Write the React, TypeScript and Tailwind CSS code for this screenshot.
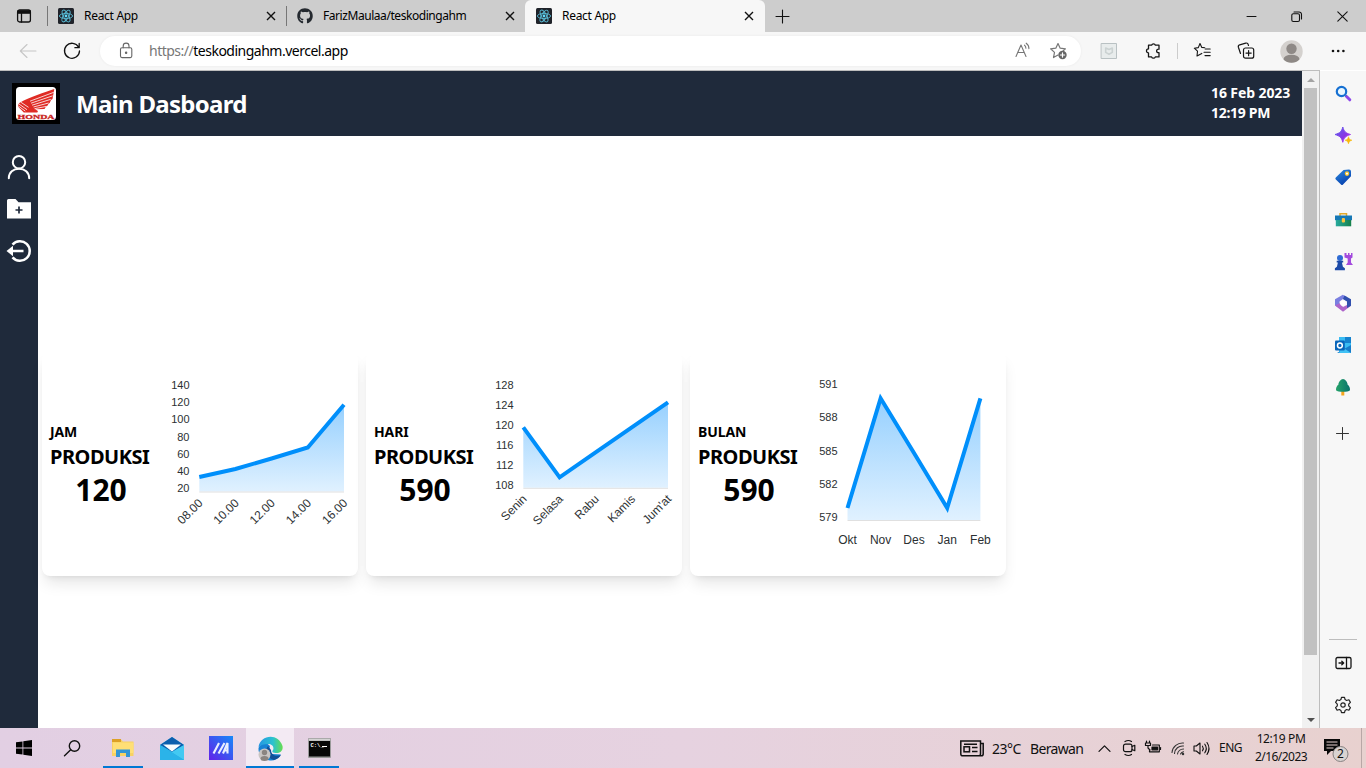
import React from "react";
import { FaGithub } from "react-icons/fa";

type Chart = {
  label: string;
  value: string;
  pts: [number, number][];
  base: number;
  ticks: string[];
  tick0: number;
  step: number;
  names: string[];
  rotated: boolean;
  nameY: number;
};

const charts: Chart[] = [
  { label: "JAM", value: "120", pts: [[199.3, 477], [235.4, 469], [271.6, 458.5], [307.8, 447.5], [344, 404.8]], base: 491.5, ticks: ["140", "120", "100", "80", "60", "40", "20"], tick0: 389, step: 17.24, names: ["08.00", "10.00", "12.00", "14.00", "16.00"], rotated: true, nameY: 503.5 },
  { label: "HARI", value: "590", pts: [[199.3, 427.3], [235.6, 477.3], [271.6, 452.3], [307.8, 427.3], [344, 402.3]], base: 487.8, ticks: ["128", "124", "120", "116", "112", "108"], tick0: 389, step: 20, names: ["Senin", "Selasa", "Rabu", "Kamis", "Jum'at"], rotated: true, nameY: 499.5 },
  { label: "BULAN", value: "590", pts: [[199.5, 508], [232.6, 398.3], [266, 453], [299.2, 508], [332.4, 398.3]], base: 520, ticks: ["591", "588", "585", "582", "579"], tick0: 388, step: 33.25, names: ["Okt", "Nov", "Des", "Jan", "Feb"], rotated: false, nameY: 544 },
];

function AreaChart({ c }: { c: Chart }) {
  const line = c.pts.map((p) => p.join(",")).join(" ");
  const first = c.pts[0][0];
  const last = c.pts[c.pts.length - 1][0];
  const top = Math.min(...c.pts.map((p) => p[1]));
  return (
    <svg width="196" height="224" viewBox="162 352 196 224" className="block shrink-0 font-['Liberation_Sans',sans-serif]">
      <defs>
        <linearGradient id={"fill" + c.label} gradientUnits="userSpaceOnUse" x1="0" x2="0" y1={top} y2={c.base}>
          <stop offset="0" stopColor="#96d0fe" />
          <stop offset="1" stopColor="#e0f1ff" />
        </linearGradient>
      </defs>
      <polygon points={`${line} ${last},${c.base} ${first},${c.base}`} fill={`url(#fill${c.label})`} />
      <path d={`M${first} ${c.base + 0.5}H${last}`} stroke="#e0e0e0" />
      <polyline points={line} fill="none" stroke="#008ffb" strokeWidth="4" strokeMiterlimit="10" />
      {c.ticks.map((t, i) => (
        <text key={t} x="189.5" y={c.tick0 + i * c.step} textAnchor="end" fontSize="11" fill="#2b3032">{t}</text>
      ))}
      {c.names.map((n, i) =>
        c.rotated ? (
          <text key={n} textAnchor="end" fontSize="12" fill="#2f3436" transform={`translate(${c.pts[i][0] + 4.2} ${c.nameY + 0.2}) rotate(-45)`}>{n}</text>
        ) : (
          <text key={n} x={c.pts[i][0]} y={c.nameY} textAnchor="middle" fontSize="12" fill="#2b3032">{n}</text>
        )
      )}
    </svg>
  );
}

function ReactIcon() {
  return (
    <svg width="16" height="16" viewBox="0 0 16 16" className="shrink-0">
      <rect width="16" height="16" rx="1.5" fill="#20232a" />
      <g fill="none" stroke="#58b9d3" strokeWidth=".9">
        <ellipse cx="8" cy="8" rx="6.6" ry="2.6" />
        <ellipse cx="8" cy="8" rx="6.6" ry="2.6" transform="rotate(60 8 8)" />
        <ellipse cx="8" cy="8" rx="6.6" ry="2.6" transform="rotate(120 8 8)" />
      </g>
      <circle cx="8" cy="8" r="1.4" fill="#61dafb" />
    </svg>
  );
}

function Tab({ title, github, active }: { title: string; github?: boolean; active?: boolean }) {
  return (
    <div className={active ? "flex h-8 w-[240px] items-center rounded-t-md bg-[#f7f7f7] pl-[11px] pr-[10px]" : github ? "flex h-8 w-[238px] items-center pl-[10px] pr-[9px]" : "flex h-8 w-[239px] items-center pl-[10px] pr-[10px]"}>
      {github ? <FaGithub size={16} color="#24292f" className="shrink-0" /> : <ReactIcon />}
      <span className={github ? "ml-[10px] flex-1 whitespace-nowrap text-[12px] leading-4 tracking-[-0.44px] text-black" : "ml-[10px] flex-1 whitespace-nowrap text-[12px] leading-4 tracking-[-0.3px] text-black"}>{title}</span>
      <svg width="12" height="12" viewBox="0 0 12 12" fill="none" stroke="#111" strokeWidth="1.4">
        <path d="M2 2l8 8M10 2l-8 8" />
      </svg>
    </div>
  );
}

function Svg({ s = 18, sw = 1.2, c = "#222", children }: { s?: number; sw?: number; c?: string; children: React.ReactNode }) {
  return (
    <svg width={s} height={s} viewBox={`0 0 ${s} ${s}`} fill="none" stroke={c} strokeWidth={sw} strokeLinecap="round" strokeLinejoin="round" className="shrink-0 overflow-visible">
      {children}
    </svg>
  );
}

function TabBar() {
  return (
    <div className="flex h-8 items-center bg-[#cdcdcd]">
      <div className="flex w-[47px] items-center pl-4">
        <Svg s={16} sw={1.3} c="#111">
          <rect x="1.6" y="2" width="12.8" height="12" rx="2" />
          <path d="M1.8 2.8h12.4v2.400H1.800z" fill="#111" />
          <path d="M5.500 5v9" />
        </Svg>
      </div>
      <div className="h-5 w-px bg-[#777]" />
      <Tab title="React App" />
      <div className="-ml-px h-5 w-px bg-[#777]" />
      <Tab title="FarizMaulaa/teskodingahm" github />
      <Tab title="React App" active />
      <div className="ml-[10px] flex">
        <Svg s={15} c="#111" sw={1.1}><path d="M1 7.5h13M7.5 1v13" /></Svg>
      </div>
      <div className="ml-auto flex w-[126px] items-center pl-1">
        <div className="flex w-[47px] pl-[2px]"><Svg s={11} c="#111" sw={1}><path d="M1 5.5h9" /></Svg></div>
        <div className="flex w-[46px]">
          <Svg s={11} c="#111" sw={1.1}>
            <rect x=".8" y="2.800" width="7.700" height="7.700" rx="1.500" />
            <path d="M3 1h5a2.500 2.500 0 0 1 2.500 2.500V8" />
          </Svg>
        </div>
        <Svg s={11} c="#111" sw={1.1}><path d="M.8.8l9.4 9.4M10.2.8L.8 10.2" /></Svg>
      </div>
    </div>
  );
}

function Toolbar() {
  return (
    <div className="flex h-[38px] items-center bg-[#f7f7f7]">
      <div className="ml-[19px] flex">
        <Svg s={18} c="#c6c6c6" sw={1.1}><path d="M17 9H1.500M8 2.500L1.300 9 8 15.500" /></Svg>
      </div>
      <div className="ml-[26px] flex">
        <Svg s={18} c="#111" sw={1.3}><path d="M15.600 5.200A7.500 7.500 0 1 0 16.500 9M16.200 1.500v4.200h-4.300" /></Svg>
      </div>
      <div className="ml-[19px] flex h-[30px] w-[981px] items-center rounded-full bg-white pl-[17px] shadow-[0_0_3px_rgba(0,0,0,0.06)]">
        <Svg s={18} c="#666" sw={1.1}>
          <rect x="3.500" y="5.800" width="11.300" height="9.800" rx="1.500" />
          <path d="M6.200 5.800V4a2.900 2.900 0 0 1 5.800 0v1.800" />
          <circle cx="9.100" cy="10.700" r=".7" fill="#666" />
        </Svg>
        <span className="ml-[14px] flex-1 text-[14px] leading-5 tracking-[-0.5px] text-black"><span className="text-[#777]">https://</span>teskodingahm.vercel.app</span>
        <Svg s={18} c="#777" sw={1.1}>
          <path d="M1 14.500L6 3l5 11.500M2.800 10.500h6.400" />
          <path d="M9.500 3.200c1 .8 1.400 1.800 1.400 3M11.200 1.200c1.800 1.300 2.800 3.200 2.700 5.400" />
        </Svg>
        <div className="ml-[17px] mr-[13px] flex">
          <Svg s={18} c="#777" sw={1.2}>
            <path d="M8 1.500l2.200 4.700 5.200.6-3.800 3.600M8 1.500L5.800 6.200l-5.200.6 3.900 3.600-1 5.200L8 13.100" />
            <circle cx="12.500" cy="13" r="4.200" fill="#666" stroke="none" />
            <path d="M10.400 13h4.200M12.500 10.900v4.200" stroke="#fff" />
          </Svg>
        </div>
      </div>
      <div className="ml-[19px] flex">
        <Svg s={18} c="#b9c1c3" sw={1}>
          <rect x="1.500" y="1.500" width="15" height="15" fill="#e8ecec" />
          <path d="M5.700 6l3.300 1.500L12.300 6v4.400L9 12.200l-3.300-1.800z" strokeWidth="1.600" stroke="#cbd2d2" />
        </Svg>
      </div>
      <div className="ml-[26px] flex">
        <Svg s={18} c="#151515" sw={1.3}>
          <path d="M4.500 3.200h3.100a2 2 0 0 1 3.800 0h3.600v4a1.800 1.800 0 1 0 0 3.400v4.300h-3.700a2 2 0 0 1-3.700 0H4.500v-4a2 2 0 0 1 0-4z" />
        </Svg>
      </div>
      <div className="ml-[15px] h-4 w-px bg-[#ccc]" />
      <div className="ml-[16px] flex">
        <Svg s={18} c="#151515" sw={1.1}>
          <path d="M10.800 5.700L7.800 5.400 6 1.500 4.300 5.600l-4 .6 3.200 3L3 14l4.800-2.600M11.200 7h5M10 10.300h6.200M11 13.600h5.200" />
        </Svg>
      </div>
      <div className="ml-[25px] flex">
        <Svg s={18} c="#151515" sw={1.2}>
          <path d="M3.500 11.500L1.400 5.300a2 2 0 0 1 1.300-2.500l6-1.700a2 2 0 0 1 2.500 1.400l.3 1" />
          <rect x="6.500" y="6" width="10.200" height="10.200" rx="2" />
          <path d="M11.600 8.500v5.200M9 11.100h5.200" />
        </Svg>
      </div>
      <div className="ml-[25px] flex">
        <svg width="23" height="23" viewBox="0 0 23 23">
          <clipPath id="avatar"><circle cx="11.500" cy="11.500" r="11.200" /></clipPath>
          <g clipPath="url(#avatar)"><path fill="#d4d1ce" d="M0 0h23v23H0z" /><circle cx="11.500" cy="8.700" r="5.200" fill="#8e8986" /><ellipse cx="11.500" cy="19.300" rx="8" ry="4.500" fill="#8e8986" /></g>
        </svg>
      </div>
      <div className="ml-[28px] flex"><svg width="14" height="4"><g fill="#111"><circle cx="2" cy="2" r="1.300" /><circle cx="7.200" cy="2" r="1.300" /><circle cx="12.400" cy="2" r="1.300" /></g></svg></div>
    </div>
  );
}

function HondaLogo() {
  return (
    <div className="flex h-[41px] w-12 items-center justify-center bg-black">
      <svg width="40" height="33" viewBox="0 0 40 33">
        <rect width="40" height="33" rx="3.500" fill="#fff" />
        <path d="M38.300 2C29 5 13 10.500 5 15c-3 1.600-3.600 3.700-1.600 6l4.400 4.400h13.500l.7-1.400-3-1.700 9.500-.3 1.500-2.500 1.200-.4 1.500-2.600 1-.4 1.300-3 1.500-1z" fill="#df2b24" />
        <path d="M37.800 5.300L14 14.200M36.700 8.800L15 16.200M34.800 12.300L16 18.200M32.500 16l-15 4M30.500 19.400l-12 2.300M3 17l8 5.700M4.500 15l8 5.300M2.800 19.300l6.500 4.800" stroke="#fff" strokeWidth=".8" />
        <text x="1.500" y="31.500" textLength="37" lengthAdjust="spacingAndGlyphs" fontSize="6.900" fontWeight="700" fill="#c91f22" stroke="#c91f22" strokeWidth=".3" fontFamily="Liberation Serif, serif">HONDA</text>
      </svg>
    </div>
  );
}

function WebPage() {
  return (
    <div className="flex w-[1302px] flex-col bg-white">
      <header className="flex h-[65px] shrink-0 items-center bg-[#1f2a3b] pl-3 pr-[12px] text-white">
        <HondaLogo />
        <h1 className="ml-[16px] flex-1 whitespace-nowrap pt-px text-[24px] font-bold leading-8 tracking-[-0.72px]">Main Dasboard</h1>
        <div className="w-[79px] whitespace-nowrap pb-px text-[14px] font-bold leading-5">
          <div className="tracking-[-0.1px]">16 Feb 2023</div>
          <div className="tracking-[-0.3px]">12:19 PM</div>
        </div>
      </header>
      <div className="flex flex-1">
        <nav className="flex w-[38px] flex-col items-center gap-[18px] bg-[#1f2a3b] pt-[19px]">
          <Svg s={24} c="#fff" sw={2}><circle cx="12" cy="7.200" r="6.200" /><path d="M1.800 23.300c0-5.800 4.500-9.600 10.200-9.600s10.200 3.800 10.200 9.600" /></Svg>
          <svg width="24" height="24" viewBox="0 0 24 24"><path fill="#fff" d="M0 3.500A1.500 1.500 0 0 1 1.500 2h7l3 3.200H24v16.300H0z" /><path stroke="#1f2a3b" strokeWidth="1.700" d="M12 9.500v7M8.500 13h7" /></svg>
          <svg width="26" height="24" viewBox="0 0 26 24" fill="none" stroke="#fff" strokeWidth="2.500"><path d="M6.500 5.600a9.800 9.800 0 1 1 0 12.800M17.500 12H5" /><path d="M.5 12L7 6.800v10.400z" fill="#fff" stroke="none" /></svg>
        </nav>
        <main className="flex flex-1 items-start gap-2 pl-1 pt-[216px]">
          {charts.map((c) => (
            <section key={c.label} className="flex h-[224px] w-[316px] items-center justify-between rounded-lg bg-white pl-2 shadow-lg">
              <div className="w-[102px] whitespace-nowrap pt-[2px] font-bold text-black">
                <div className="text-[14px] leading-5 tracking-[-0.1px]">{c.label}</div>
                <div className="text-[20px] leading-[30px] tracking-[-0.48px]">PRODUKSI</div>
                <div className="text-center text-[30px] leading-9">{c.value}</div>
              </div>
              <AreaChart c={c} />
            </section>
          ))}
        </main>
      </div>
    </div>
  );
}

function ScrollBar() {
  return (
    <div className="flex w-[17px] flex-col items-center bg-[#f1f1f1]">
      <div className="flex h-[17px] items-center"><svg width="8" height="4"><path d="M0 4l4-4 4 4z" fill="#a3a3a3" /></svg></div>
      <div className="h-[567px] w-[13px] bg-[#c1c1c1]" />
      <div className="mt-auto flex h-[17px] items-center"><svg width="8" height="4"><path d="M0 0h8L4 4z" fill="#505050" /></svg></div>
    </div>
  );
}

const sideIcons: React.ReactNode[] = [
  <g key="s"><circle cx="6.500" cy="6.500" r="4.700" fill="#eaf8ff" stroke="#1670d2" strokeWidth="2.200" /><path d="M10.500 10.500l1.300 1.300" stroke="#1650b0" strokeWidth="2" /><path d="M11.800 11.800l3 3" stroke="#8f47e9" strokeWidth="3" strokeLinecap="round" /></g>,
  <g key="d"><path d="M7.800 0c1.200 4.500 2.700 6 7.700 7.500-5 1.600-6.500 3.200-7.700 7.800C6.600 10.700 5.200 9.100 0 7.500 5.200 6 6.600 4.500 7.800 0z" fill="url(#violet)" stroke="url(#violet)" strokeLinejoin="round" /><path d="M13.500 9.700c.7 2.400 1.200 2.900 3.500 3.500-2.300.7-2.800 1.200-3.500 3.700-.7-2.500-1.200-3-3.500-3.700 2.300-.6 2.800-1.100 3.500-3.500z" fill="#f9b90c" stroke="#f9b90c" strokeWidth=".5" /></g>,
  <g key="t"><path d="M8.500 1L14 .5q2 0 2 2v4.700L8 15.600q-1 1-2 0L.8 10.400q-1-1 0-2z" fill="url(#blue)" /><circle cx="12" cy="4.600" r="1.700" fill="#fff" stroke="#f5c52c" strokeWidth="1.200" /></g>,
  <g key="b"><path d="M5 5V2.800h6.500V5" fill="none" stroke="#e3a92b" strokeWidth="1.500" /><path d="M0 4.500h17v4.700H0z" fill="#1678b5" /><path d="M.8 9h15.400v6.300H.8z" fill="url(#teal)" /><rect x="6.800" y="7" width="3.200" height="4.500" rx="1" fill="#f8c440" /></g>,
  <g key="c"><path d="M9.500 0h2v2H13V0h1.500v2H16V0h1.500v4.500l-1.500 1v4l2 2.500h-7l1.700-2.500v-4L9.500 4.500z" fill="#a34add" /><circle cx="5" cy="5" r="3" fill="#2e6bd3" /><path d="M1.700 7.700h6.500v1.800H6.900l1 4.200 2 1.500v2h-10v-2l2-1.500 1-4.200H1.700z" fill="#1c4aa8" /></g>,
  <g key="o"><path d="M7.800-.2l4 2.200v4L8 4 4.500 6.500V13L0 10.500V4.300z" fill="#7a7fe0" /><path d="M0 10.500l4.500-2.300L8 12l4-2 4 .7-8 6z" fill="#ae65ca" /><path d="M9.500.6L16 4.300v6.400L12 13V6.500L8 4z" fill="#304fae" /><circle cx="8" cy="8.200" r="2.700" fill="#fff" /></g>,
  <g key="l"><path d="M4 0h12v15H4z" fill="#39bcf3" /><path d="M10 0h6v6h-6z" fill="#1582ce" /><path d="M2 16l14-8v8z" fill="#167dca" /><path d="M7 10l9 6H4z" fill="#41c2f5" /><rect y="3.500" width="9.800" height="10" rx="1" fill="#0865b9" /><circle cx="4.900" cy="8.500" r="2.400" fill="none" stroke="#fff" strokeWidth="1.500" /></g>,
  <g key="tr"><path d="M6.300 11h3v5.500h-3z" fill="#f5a51d" /><path d="M8 0c2 0 5 3.700 4.500 5.500 2 1.500 3 4.500 2.300 6-1 1.700-12.600 1.700-13.600 0-.7-1.500.3-4.500 2.300-6C3 3.700 6 0 8 0z" fill="url(#tree)" /></g>,
];

function EdgeSidebar() {
  return (
    <aside className="flex w-[47px] flex-col items-center border-l border-[#bdbdbd] bg-[#f7f7f7] pt-[14px]">
      <svg width="0" height="0" className="absolute"><defs>
        <linearGradient id="violet" x2="1" y2="1"><stop stopColor="#5965ee" /><stop offset=".6" stopColor="#8a35e5" /><stop offset="1" stopColor="#d34ff0" /></linearGradient>
        <linearGradient id="blue" x2=".6" y2="1"><stop stopColor="#2e8de0" /><stop offset="1" stopColor="#063fae" /></linearGradient>
        <linearGradient id="teal"><stop stopColor="#27aa9e" /><stop offset="1" stopColor="#15804a" /></linearGradient>
        <linearGradient id="tree"><stop stopColor="#26a36a" /><stop offset="1" stopColor="#08736b" /></linearGradient>
      </defs></svg>
      <div className="flex flex-col gap-[25px]">
        {sideIcons.map((icon, i) => <svg key={i} width="17" height="17" viewBox="0 0 17 17" className="overflow-visible">{icon}</svg>)}
      </div>
      <div className="mt-[31px] flex pr-px"><Svg s={13} c="#333" sw={1}><path d="M.5 6.500h12M6.500 .5v12" /></Svg></div>
      <div className="mt-auto h-px w-7 bg-[#bdbdbd]" />
      <div className="mt-[15px] flex">
        <Svg s={17} c="#151515" sw={1.300}><rect x="1" y="2.500" width="15" height="11" rx="1.500" /><path d="M11.500 2.500v11M4 8h4.500M6.800 6.200l1.900 1.800-1.900 1.800" /></Svg>
      </div>
      <div className="mb-[14px] mt-[24px] flex">
        <Svg s={18} c="#222" sw={1.200}><path d="M7.500 1.300h3l.6 2.300 1.500.9 2.300-.7 1.500 2.600-1.700 1.700v1.800l1.700 1.700-1.500 2.600-2.300-.7-1.500.9-.6 2.300h-3l-.6-2.300-1.500-.9-2.300.7-1.500-2.600 1.700-1.700V8.100L1.600 6.400l1.500-2.600 2.300.7 1.500-.9z" /><circle cx="9" cy="9" r="2.200" /></Svg>
      </div>
    </aside>
  );
}

function TaskButton({ running, active, children }: { running?: boolean; active?: boolean; children: React.ReactNode }) {
  return (
    <div className={active ? "flex h-10 w-12 flex-col items-center bg-[#f3eaf3]" : "flex h-10 w-12 flex-col items-center"}>
      <div className="flex flex-1 items-center pt-[2px]">{children}</div>
      <div className={active ? "h-[2px] w-full bg-[#0078d4]" : running ? "h-[2px] w-10 bg-[#0078d4]" : "h-[2px]"} />
    </div>
  );
}

function Taskbar() {
  return (
    <footer className="flex h-10 items-center bg-linear-to-r from-[#e2cfe3] via-[#e6d2e0] to-[#e8d1cf] text-[#111]">
      <TaskButton><svg width="16" height="16" viewBox="0 0 16 16"><path d="M0 2.300L6.500 1.400v6.100H0zM7.300 1.300L16 0v7.500H7.300zM0 8.400h6.500v6.200L0 13.700zM7.300 8.400H16V16l-8.700-1.300z" fill="#000" /></svg></TaskButton>
      <TaskButton><Svg s={17} c="#111" sw={1.400}><circle cx="10.500" cy="6" r="5.200" /><path d="M6.700 9.700L.5 15.700" /></Svg></TaskButton>
      <div className="ml-[3px]"><TaskButton running>
        <svg width="22" height="20" viewBox="0 0 22 20"><path d="M0 1.500h9l2 2h10.500V18H0z" fill="#f8d263" /><path d="M0 1h9v3H0z" fill="#dda126" /><path d="M1 4.500h20.500V15H1z" fill="#ffdf76" /><path d="M4 19v-7.500h14V19h-4v-4H8v4z" fill="#3295d5" /></svg>
      </TaskButton></div>
      <div className="ml-px"><TaskButton>
        <svg width="24" height="23" viewBox="0 0 24 23"><path d="M0 8l12-8 12 8v15H0z" fill="#25a9e2" /><path d="M0 8l12-8 12 8-12 7z" fill="#0b5eae" /><path d="M3 7.500h18l-9 7z" fill="#f7fbfe" /><path d="M0 8l12 7L24 8v15L0 8z" fill="#43c9f2" /><path d="M0 23V8l24 15z" fill="#2bb3e9" /></svg>
      </TaskButton></div>
      <div className="ml-px"><TaskButton>
        <svg width="24" height="24" viewBox="0 0 24 24"><defs><linearGradient id="asus" x1="0" y1="1" x2="1" y2="0"><stop stopColor="#6321e9" /><stop offset="1" stopColor="#1689f8" /></linearGradient></defs><path fill="url(#asus)" d="M0 0h24v24H0z" /><path d="M4.500 17.500L10 7M9.500 17.500L15.500 7M14 17.500L18.500 7v10.500M15.500 14.500h3" stroke="#e9efff" strokeWidth="2.100" fill="none" /></svg>
      </TaskButton></div>
      <div className="ml-px"><TaskButton active>
        <svg width="25" height="25" viewBox="0 0 25 25"><defs><linearGradient id="edge"><stop stopColor="#2496e4" /><stop offset=".6" stopColor="#2bc2cf" /><stop offset="1" stopColor="#66dd4e" /></linearGradient></defs><path d="M.5 12C2 7 9 6 12 10l-1 4 3 4 9 .5C20 23 16 25 12 24.500 5 24 0 19 .5 12z" fill="#1682d4" /><path d="M.5 11C2-1 20-4 24.500 10c1 5-3 7.500-7 7-3 0-4-1.500-2.500-3 1.500-3-1-6-5-6C6 8 2.500 9 .5 11z" fill="url(#edge)" /><path d="M10 10c-4 5 0 13 6 14 3-.5 5.500-2.500 7-5-5 2-10 0-10-5z" fill="#124f98" /><circle cx="6.500" cy="18.500" r="6" fill="#c9c5c3" /><circle cx="6.500" cy="16.500" r="2.700" fill="#8b8581" /><ellipse cx="6.500" cy="22.500" rx="4" ry="2.500" fill="#8b8581" /></svg>
      </TaskButton></div>
      <div className="ml-px"><TaskButton running>
        <svg width="23" height="20" viewBox="0 0 23 20"><rect width="23" height="20" rx="1" fill="#999" /><path d="M.7.700h21.600v2H.7z" fill="#d3d3d3" /><path d="M1 3h21v15.500H1z" fill="#080808" /><text x="2.500" y="9" fontSize="5.500" fontWeight="700" fill="#fff" fontFamily="Liberation Mono, monospace">C:\_</text><path d="M14 8.500h5" stroke="#fff" /></svg>
      </TaskButton></div>
      <div className="ml-auto flex items-center">
        <svg width="24" height="17" viewBox="0 0 24 17" fill="none" stroke="#111" strokeWidth="1.500"><path d="M20.500 2.500V14q0 1.800-1.500 1.800H3Q.8 15.800.8 14V1h19.700v2.500h2.700V14q0 1.800-2 1.800H18.500" /><rect x="4" y="6.800" width="5.500" height="5" /><path d="M4 4.200h13M12 7.500h5.500M12 11.500h5.500" /></svg>
        <span className="ml-[8px] w-[38px] whitespace-nowrap text-[14px] tracking-[-0.5px]">23°C</span>
        <span className="w-[68px] whitespace-nowrap text-[14px] tracking-[-0.68px]">Berawan</span>
        <Svg s={13} c="#111" sw={1.200}><path d="M1 9.300l5.500-5.500L12 9.300" /></Svg>
        <div className="ml-[11px] flex"><Svg s={16} c="#111" sw={1.200}><rect x="1.500" y="4.200" width="8.500" height="7.500" rx="2" /><path d="M10 6.500l2.800-1.200v5.400L10 9.500M3 1.500q3.500-2 6.500 0M3 14.500q3.500 2 6.500 0" /></Svg></div>
        <div className="ml-[7px] flex"><Svg s={16} c="#111" sw={1.200}><path d="M4.500 10.500v1.300h9.800V5H7.500M1.500 1v2M4.500 1v2M.5 3h5v2.500H.5zM3 5.500V8l2 2" /><path d="M7 7h5.500v2.800H7z" fill="#111" /><path d="M15.500 7.500v2" /></Svg></div>
        <div className="ml-[10px] flex"><Svg s={14} c="#333" sw={1.100}><path d="M1 11.500A10.500 10.500 0 0 1 12.500 2M3.500 12.500A8 8 0 0 1 12.500 5M6.500 13A6 6 0 0 1 12.500 8M9.500 13q1-2 3-2.300" /><circle cx="12" cy="13" r=".7" fill="#111" /></Svg></div>
        <div className="ml-[8px] flex"><Svg s={17} c="#111" sw={1.100}><path d="M1 6v5h2.300L7 14V3L3.300 6zM9.500 6.200q1.600 2.300 0 4.600M11.800 4.200q3 4.200 0 8.600M14 2.500q4 6 0 12" /></Svg></div>
        <span className="ml-[9px] w-[24px] whitespace-nowrap text-[12px] tracking-[-0.5px]">ENG</span>
        <div className="ml-[8px] w-[60px] whitespace-nowrap text-center text-[12px] leading-[18px] tracking-[-0.4px]">
          <div>12:19 PM</div>
          <div className="tracking-[-0.55px]">2/16/2023</div>
        </div>
        <div className="ml-[12px] mr-[11px] flex pt-[2px]">
          <svg width="27" height="26" viewBox="0 0 27 26"><path d="M1 3h16v12h-9l-4 4v-4H1z" fill="#080808" /><path d="M3.500 6h11M3.500 9h11M3.500 12h7" stroke="#e8d1cf" /><circle cx="17.500" cy="18" r="7.500" fill="#d9d3d1" stroke="#858080" /><text x="17.500" y="22.200" fontSize="12" fill="#111" textAnchor="middle" fontFamily="Noto Sans, sans-serif">2</text></svg>
        </div>
        <div className="mr-[4px] h-10 w-px bg-[#b9a7a6]" />
      </div>
    </footer>
  );
}

export default function App() {
  return (
    <div className="flex h-[768px] w-[1366px] flex-col overflow-hidden bg-white font-['Noto_Sans',sans-serif]">
      <TabBar />
      <Toolbar />
      <div className="h-px w-[1320px] shrink-0 bg-[#bdbdbd]" />
      <div className="flex h-[657px] shrink-0">
        <WebPage />
        <ScrollBar />
        <EdgeSidebar />
      </div>
      <Taskbar />
    </div>
  );
}
